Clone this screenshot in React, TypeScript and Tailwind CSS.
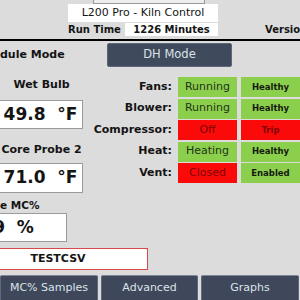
// L200 Pro kiln control panel, cropped 300x300 view.
const statusRows = [
  { label: "Fans:", state: "Running", ok: true, health: "Healthy", healthOk: true },
  { label: "Blower:", state: "Running", ok: true, health: "Healthy", healthOk: true },
  { label: "Compressor:", state: "Off", ok: false, health: "Trip", healthOk: false },
  { label: "Heat:", state: "Heating", ok: true, health: "Healthy", healthOk: true },
  { label: "Vent:", state: "Closed", ok: false, health: "Enabled", healthOk: true },
];

function NavButton({ children, className }: { children: string; className: string }) {
  return (
    <button
      type="button"
      className={[
        "h-[27px] shrink-0 rounded-[2px] border border-[#5f697b] border-t-[#7f8899] bg-[#3e485a] text-[11px] text-[#dde2ea] flex items-center justify-center",
        className,
      ].join(" ")}
    >
      {children}
    </button>
  );
}

export default function App() {
  return (
    <div className="w-[300px] h-[300px] overflow-hidden bg-[#dddcdd] flex flex-col font-['DejaVu_Sans',sans-serif] text-[#141414] whitespace-nowrap">
      {/* header */}
      <div className="h-[39px] flex flex-col shrink-0">
        <div className="ml-[93px] w-[112px] h-[4px] border-x border-b border-[#9a9a9a] bg-[#ededed]" />
        <div className="ml-[68px] w-[150px] h-[18px] bg-white flex items-center justify-center text-[11px]">
          L200 Pro - Kiln Control
        </div>
        <div className="mt-[1px] h-[13px] flex items-center">
          <span className="ml-[68px] w-[57px] shrink-0 text-[10px] font-bold">Run Time</span>
          <span className="w-[93px] shrink-0 h-full bg-white flex items-center justify-center text-[10px] font-bold">
            1226 Minutes
          </span>
          <span className="ml-[47px] shrink-0 text-[10px] font-bold">Version</span>
        </div>
      </div>
      <div className="h-[2px] bg-black shrink-0" />

      {/* mode row */}
      <div className="mt-[2px] h-[24px] flex items-center shrink-0">
        <span className="w-[107px] text-[11px] font-bold">dule Mode</span>
        <button
          type="button"
          className="w-[125px] h-[24px] rounded-[2px] border border-[#5d677a] bg-[#3f4a5c] text-[11.5px] text-[#dde2ea] flex items-center justify-center"
        >
          DH Mode
        </button>
      </div>

      {/* main */}
      <div className="h-[208px] flex flex-col shrink-0">
        <div className="flex">
          {/* readings */}
          <div className="w-[88px] shrink-0 flex flex-col">
            <span className="mt-[11px] h-[13px] leading-[13px] w-[83px] text-center text-[11px] font-bold">Wet Bulb</span>
            <div className="mt-[9px] ml-[-2px] w-[85px] h-[29px] bg-white border border-[#9b9b9b] flex items-center justify-center text-[17px] font-bold whitespace-pre">
              49.8  °F
            </div>
            <span className="mt-[14px] h-[13px] leading-[13px] w-[83px] text-center text-[11px] font-bold">Core Probe 2</span>
            <div className="mt-[7px] ml-[-2px] w-[85px] h-[30px] bg-white border border-[#9b9b9b] flex items-center justify-center text-[17px] font-bold whitespace-pre">
              71.0  °F
            </div>
            <span className="mt-[6px] h-[13px] leading-[13px] text-[10.5px] font-bold">e MC%</span>
            <div className="mt-[1px] ml-[-40px] w-[107px] h-[29px] bg-white border border-[#9b9b9b] flex items-center justify-center text-[17px] font-bold whitespace-pre">
              9  %
            </div>
          </div>

          {/* equipment status */}
          <div className="mt-[10px] flex flex-col gap-[1.5px]">
            {statusRows.map((r) => (
              <div key={r.label} className="h-[20px] flex items-center">
                <span className="w-[84px] text-right text-[11px] font-bold">{r.label}</span>
                <span
                  className={[
                    "ml-[6px] w-[59px] h-full flex items-center justify-center text-[11px]",
                    r.ok ? "bg-[#8ccf4c] text-[#22331a]" : "bg-[#fb0a0a] text-[#7d0303]",
                  ].join(" ")}
                >
                  {r.state}
                </span>
                <span
                  className={[
                    "ml-[4px] w-[59px] h-full flex items-center justify-center text-[8.5px] font-bold",
                    r.healthOk ? "bg-[#8ccf4c] text-[#151a10]" : "bg-[#fb0a0a] text-[#7d0303]",
                  ].join(" ")}
                >
                  {r.health}
                </span>
              </div>
            ))}
          </div>
        </div>

        <div className="mt-[6px] ml-[-32px] w-[180px] h-[22px] bg-white border border-[#d9484b] flex items-center justify-center text-[11px] font-bold">
          TESTCSV
        </div>
      </div>

      {/* bottom nav */}
      <div className="flex gap-[3px]">
        <NavButton className="w-[98px]">MC% Samples</NavButton>
        <NavButton className="w-[97px]">Advanced</NavButton>
        <NavButton className="w-[98px]">Graphs</NavButton>
      </div>
    </div>
  );
}
